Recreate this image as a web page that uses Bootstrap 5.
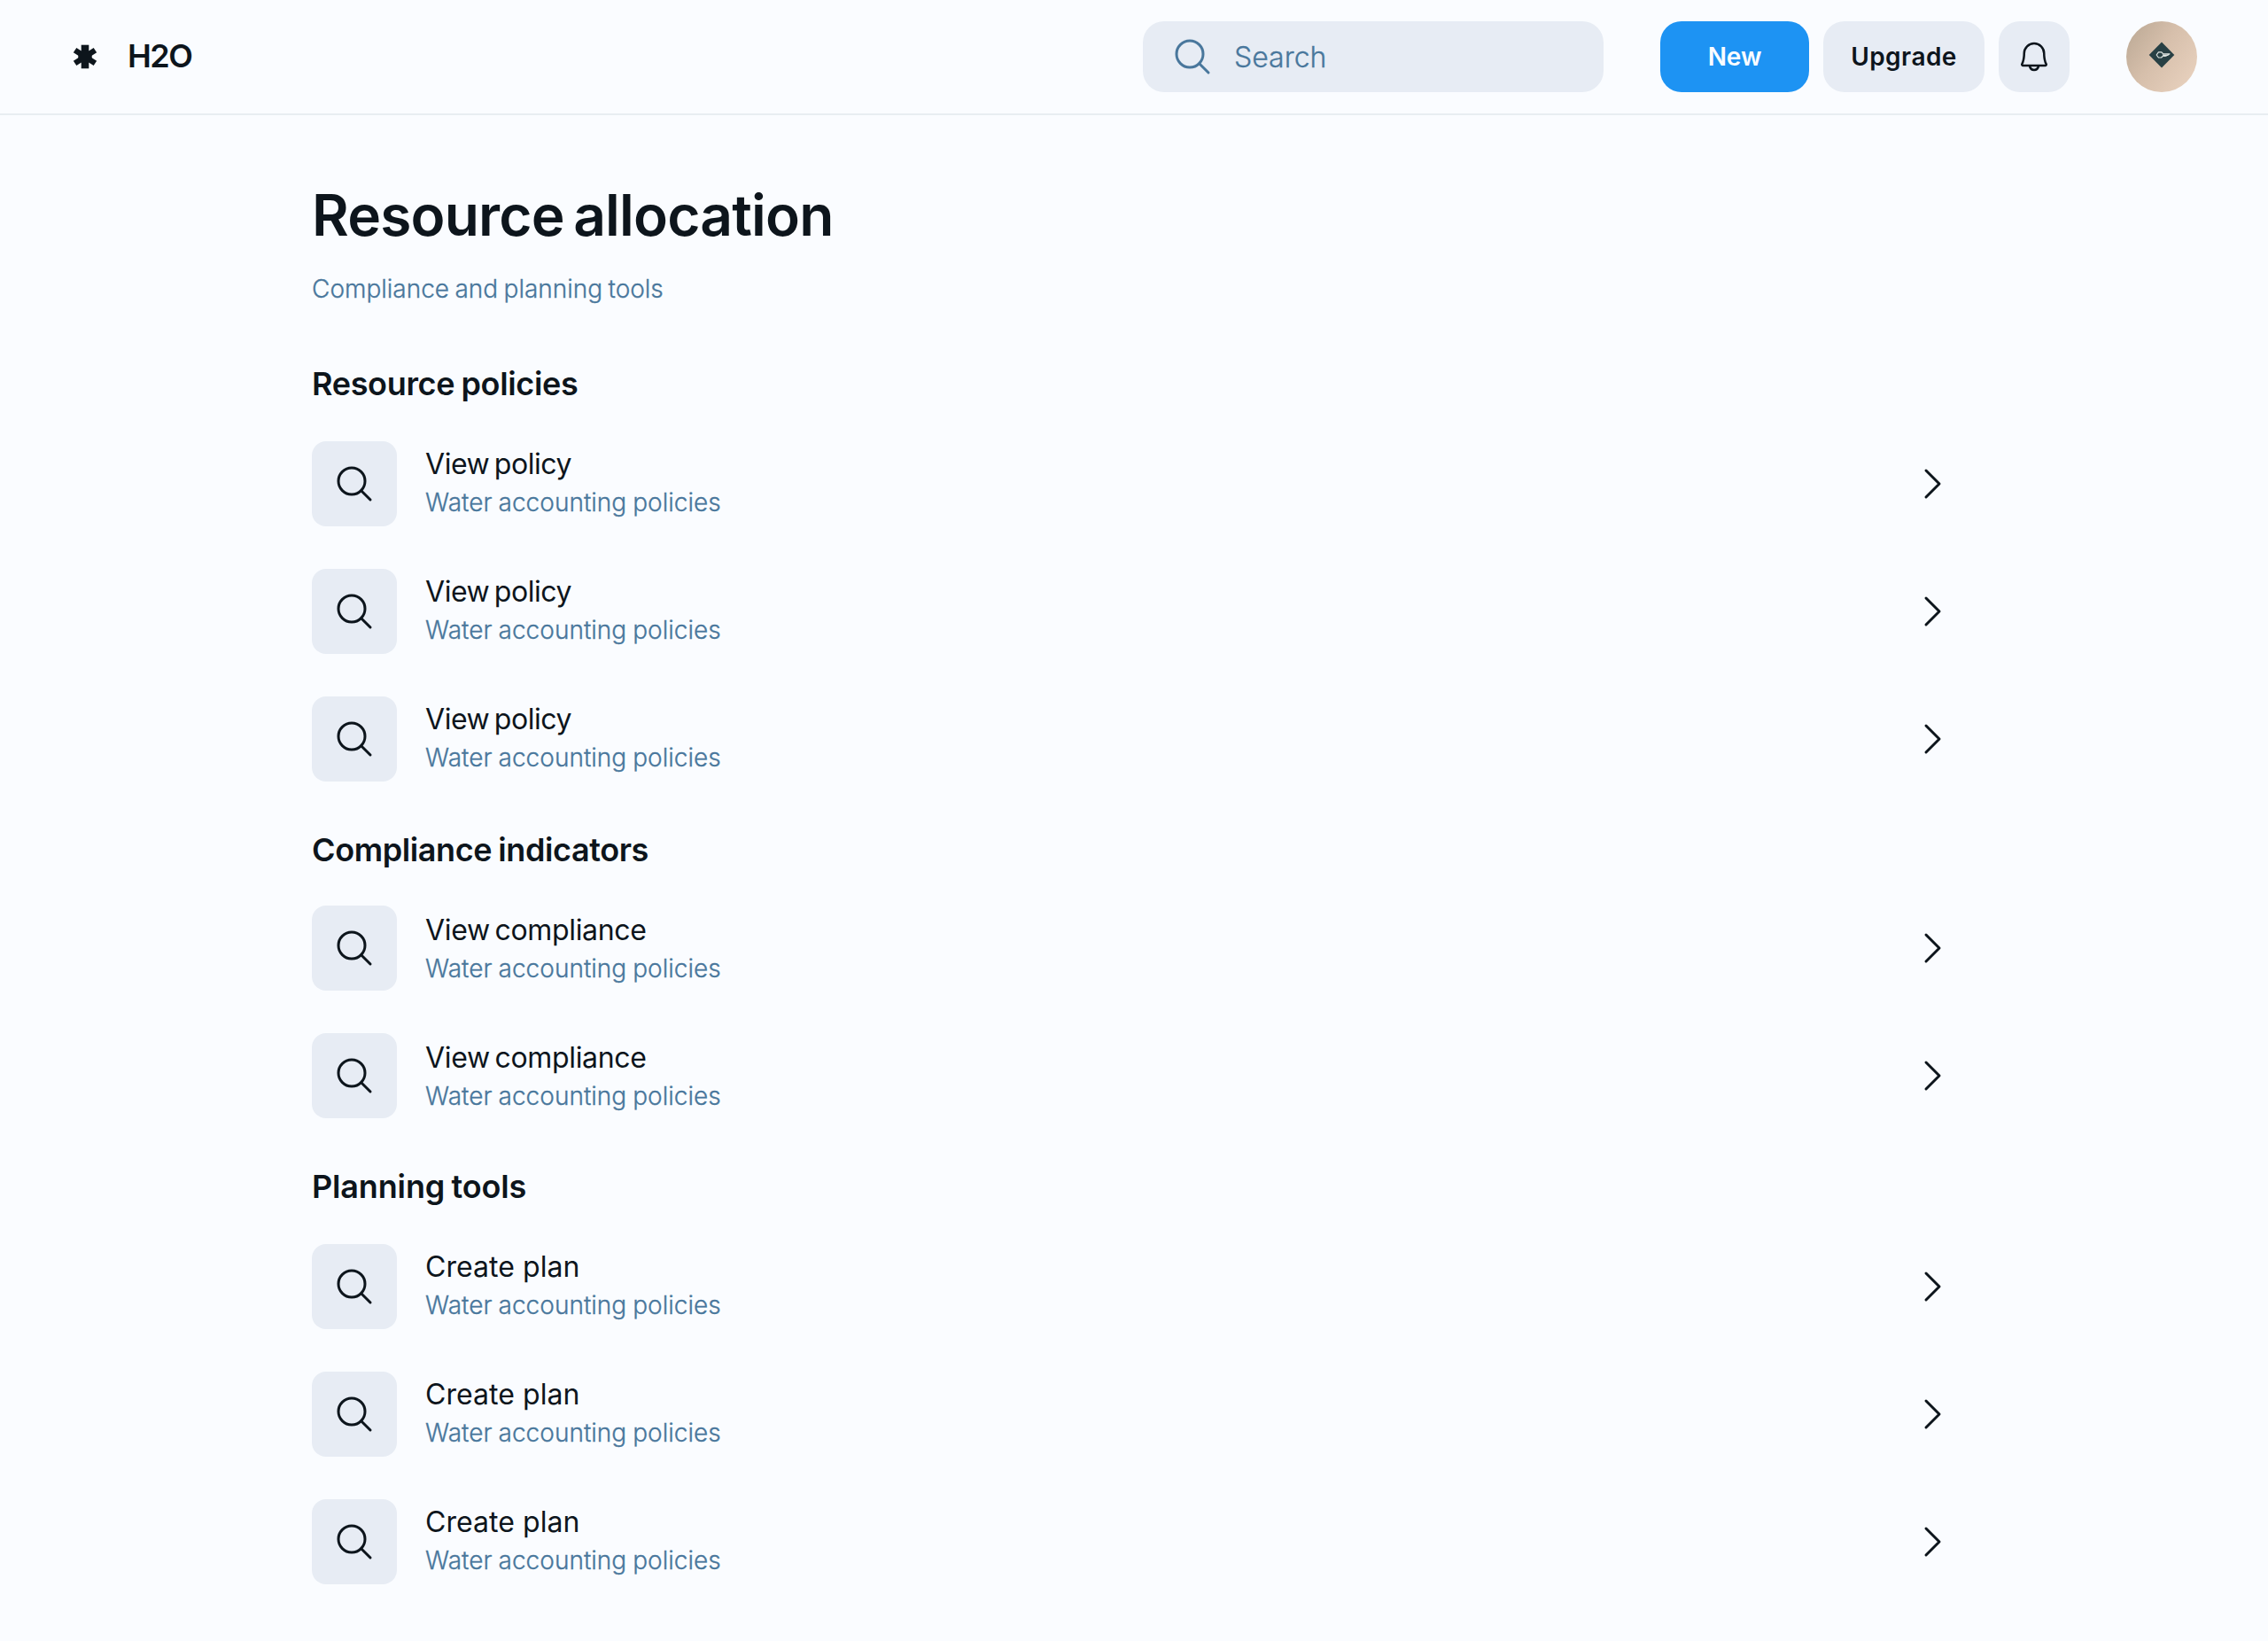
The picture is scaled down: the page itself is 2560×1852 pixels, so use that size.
<!DOCTYPE html>
<html lang="en">
<head>
<meta charset="utf-8">
<meta name="viewport" content="width=device-width, initial-scale=1">
<title>H2O – Resource allocation</title>
<link href="https://cdn.jsdelivr.net/npm/bootstrap@5.3.0/dist/css/bootstrap.min.css" rel="stylesheet">
<style>
  :root { --ink: #0d151c; --muted: #49779c; --tile: #e7ecf4; --accent: #1d93f3; }
  body { background: #fafcff; color: var(--ink); font-family: Inter, "Liberation Sans", sans-serif; min-height: 1852px; }
  svg { display: block; flex: none; }
  .topbar { height: 130px; padding: 24px 80px; border-bottom: 2px solid #e8edf1; }
  .brand-name { font-size: 36px; font-weight: 600; letter-spacing: -1.5px; line-height: 44px; margin-left: 32px; padding-bottom: 2px; }
  .search-box { width: 520px; height: 80px; border-radius: 24px; background: var(--tile); padding-left: 32px; color: var(--muted); }
  .search-box .form-control, .search-box .form-control:focus { background: transparent; border: 0; box-shadow: none; padding: 0 0 0 23px; height: 80px; font-size: 32px; font-weight: 300; color: var(--ink); -webkit-text-stroke: .3px; }
  .search-box .form-control::placeholder { color: var(--muted); opacity: 1; }
  .bar-btn { height: 80px; border: 0; border-radius: 24px; padding: 0; font-size: 28px; font-weight: 600; line-height: 40px; letter-spacing: .45px; background: var(--tile); color: var(--ink); }
  .bar-btn:hover { background: #dce4ee; color: var(--ink); }
  .btn-new { width: 168px; background: var(--accent); color: #fafcff; letter-spacing: -.1px; }
  .btn-new:hover { background: #1683dc; color: #fff; }
  .btn-up { width: 182px; }
  .btn-bell { width: 80px; }
  .btn-group-top { margin: 0 64px; }
  .user-pic { width: 80px; height: 80px; background: linear-gradient(125deg, #b9a793 0%, #d6bfab 45%, #ebd4c1 100%); padding-bottom: 5px; }
  .page-body { width: 1920px; padding: 73px 32px 40px; }
  .page-title { font-size: 64px; font-weight: 600; line-height: 80px; letter-spacing: -.8px; word-spacing: -5px; margin-bottom: 23px; }
  .page-sub { font-size: 28px; font-weight: 300; line-height: 40px; letter-spacing: 0; word-spacing: -1.5px; color: var(--muted); margin-bottom: 34px; -webkit-text-stroke: .3px; }
  .sec-title { font-size: 36px; font-weight: 600; line-height: 44px; padding: 31px 0 19px; margin: 0; letter-spacing: -.33px; word-spacing: -1.5px; }
  .sec-compliance .sec-title { letter-spacing: -.4px; padding-bottom: 17px; }
  .sec-planning .sec-title { letter-spacing: -.15px; }
  .item-link { padding: 24px 0; color: inherit; text-decoration: none; }
  .item-tile { width: 96px; height: 96px; border-radius: 16px; background: var(--tile); margin-right: 32px; }
  .item-text { padding-top: 4px; height: 96px; }
  .sec-compliance .item-text { padding-top: 6px; }
  .item-name { font-size: 32px; line-height: 44px; letter-spacing: -.45px; word-spacing: -3px; }
  .sec-compliance .item-name { letter-spacing: -.33px; }
  .sec-planning .item-name { letter-spacing: .05px; word-spacing: 0; }
  .item-note { font-size: 28px; font-weight: 300; line-height: 42px; letter-spacing: .03px; word-spacing: -1px; color: var(--muted); -webkit-text-stroke: .3px; }
</style>
<script src="https://cdn.jsdelivr.net/npm/bootstrap@5.3.0/dist/js/bootstrap.bundle.min.js"></script>
</head>
<body>
<svg width="0" height="0" class="position-absolute" aria-hidden="true">
  <symbol id="i-search" viewBox="0 0 48 48"><g fill="none" stroke="currentColor" stroke-width="3" stroke-linecap="round"><circle cx="21" cy="21" r="15"/><path d="M31.7 31.7 42 42"/></g></symbol>
  <symbol id="i-caret" viewBox="0 0 48 48"><path d="M18 9 33 24 18 39" fill="none" stroke="currentColor" stroke-width="3" stroke-linecap="round" stroke-linejoin="round"/></symbol>
</svg>

<header class="topbar d-flex align-items-center justify-content-between">
  <div class="d-flex align-items-center">
    <svg width="32" height="32" viewBox="-16 -16 32 32" fill="#0d151c"><rect x="-4.3" y="-13.3" width="8.6" height="26.6"/><rect x="-3.2" y="-13.6" width="6.4" height="27.2" transform="rotate(57)"/><rect x="-3.2" y="-13.6" width="6.4" height="27.2" transform="rotate(-57)"/><circle r="7.8"/></svg>
    <div class="brand-name">H2O</div>
  </div>
  <div class="d-flex align-items-center">
    <div class="search-box d-flex align-items-center">
      <svg width="48" height="48"><use href="#i-search"/></svg>
      <input type="text" class="form-control" placeholder="Search">
    </div>
    <div class="btn-group-top d-flex gap-3">
      <button class="btn bar-btn btn-new">New</button>
      <button class="btn bar-btn btn-up">Upgrade</button>
      <button class="btn bar-btn btn-bell d-flex align-items-center justify-content-center" aria-label="Notifications">
        <svg width="40" height="40" viewBox="0 0 256 256" fill="currentColor"><path d="M221.8,175.94C216.25,166.38,208,139.33,208,104a80,80,0,1,0-160,0c0,35.34-8.26,62.38-13.81,71.94A16,16,0,0,0,48,200H88.81a40,40,0,0,0,78.38,0H208a16,16,0,0,0,13.8-24.06ZM128,216a24,24,0,0,1-22.62-16h45.24A24,24,0,0,1,128,216ZM48,184c7.7-13.24,16-43.92,16-80a64,64,0,1,1,128,0c0,36.05,8.28,66.73,16,80Z"/></svg>
      </button>
    </div>
    <div class="user-pic rounded-circle d-flex align-items-center justify-content-center">
      <svg width="30" height="30" viewBox="-15 -15 30 30"><path d="M0-14.5 14.3 0 0 14.5-14.3 0Z" fill="#284044"/><g fill="none" stroke="#dfe5e2" stroke-width="1.2" stroke-linejoin="round"><path d="M1.6-1.4-.4-3.2H-3.6L-5.8 0-3.6 3H-.4L1.6 1"/><path d="M.8-1.2H9L6.6.4H1.2M2 1.4 5.6 1.2" /></g></svg>
    </div>
  </div>
</header>

<main class="page-body mx-auto">
  <h1 class="page-title">Resource allocation</h1>
  <p class="page-sub">Compliance and planning tools</p>
  <div id="sections"></div>
</main>

<script>
  const sections = [
    { key: 'policies', title: 'Resource policies', item: 'View policy', count: 3 },
    { key: 'compliance', title: 'Compliance indicators', item: 'View compliance', count: 2 },
    { key: 'planning', title: 'Planning tools', item: 'Create plan', count: 3 }
  ];
  const row = name => `
    <a href="#" class="item-link d-flex align-items-center">
      <span class="item-tile d-flex align-items-center justify-content-center"><svg width="48" height="48"><use href="#i-search"/></svg></span>
      <span class="item-text d-flex flex-column flex-grow-1"><span class="item-name">${name}</span><span class="item-note">Water accounting policies</span></span>
      <svg width="48" height="48" class="me-1"><use href="#i-caret"/></svg>
    </a>`;
  document.getElementById('sections').innerHTML = sections.map(s =>
    `<section class="sec-${s.key}"><h2 class="sec-title">${s.title}</h2>${row(s.item).repeat(s.count)}</section>`).join('');
</script>
</body>
</html>
